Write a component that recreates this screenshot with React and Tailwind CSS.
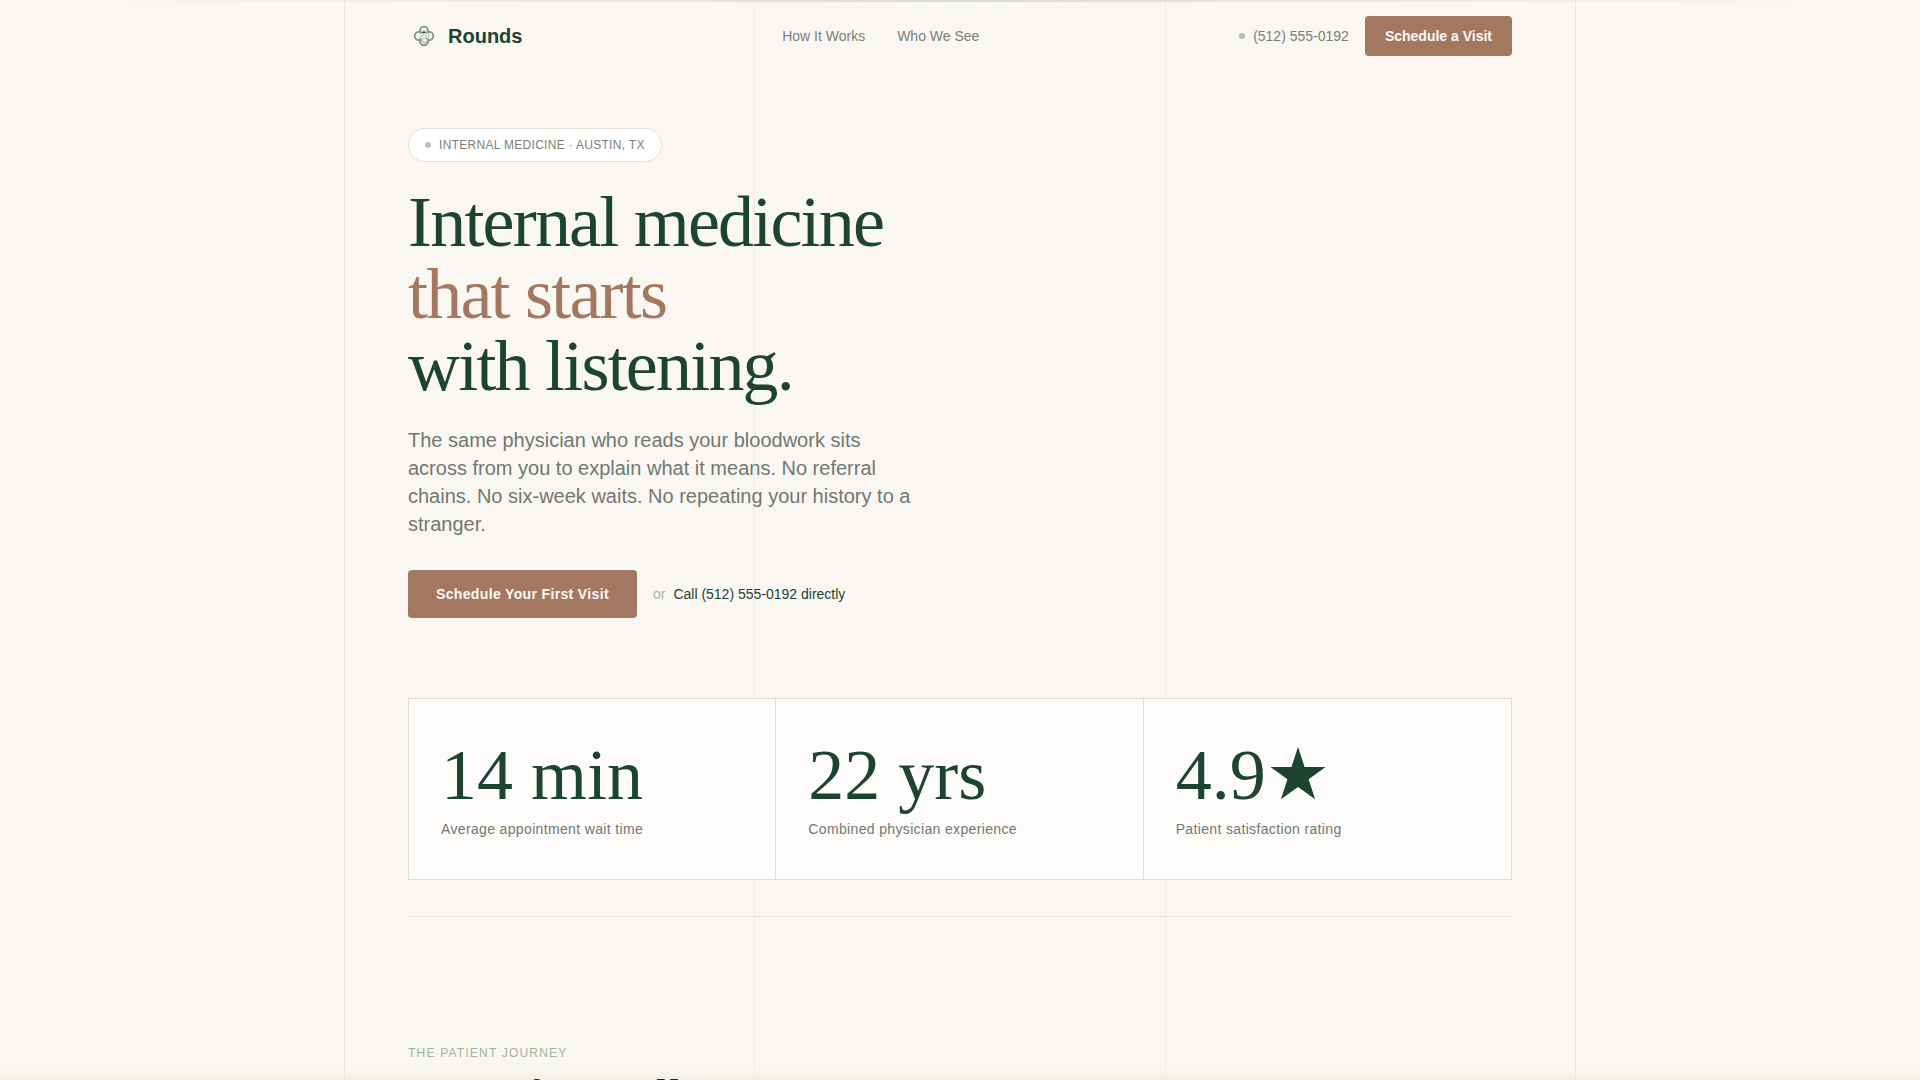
const stats = [
  { value: '14 min', label: 'Average appointment wait time' },
  { value: '22 yrs', label: 'Combined physician experience' },
  { value: '4.9★', label: 'Patient satisfaction rating' },
];

function Logo() {
  return (
    <svg className="size-8" viewBox="0 0 32 32" fill="none" aria-hidden="true">
      <path
        d="M12.4 12.4A4 4 0 1 1 19.6 12.4A4 4 0 1 1 19.6 19.6A4 4 0 1 1 12.4 19.6A4 4 0 1 1 12.4 12.4Z"
        stroke="#7b9a8a"
        strokeWidth="1.8"
      />
      <path d="M12.500 14c.5-4 6-4.500 7.500-.5M11 18c2-.5 3.500-3 5-3.500M20.500 14c1 2 .5 4.500-1.500 5.500" stroke="#9bb3a6" strokeWidth="1" />
      <path d="M13.500 12.400q2-1.600 4.500-.4q-.5 1.400-2.400 1.200" fill="#1b4332" />
      <path d="M16.500 15c3 0 3 3.500 0 3.500s-3 3.500.5 3.500M13 19c0 4.500 5 5.500 6.500 1.500" stroke="#c4a295" strokeWidth="1" />
    </svg>
  );
}

function GridLines() {
  return (
    <div className="pointer-events-none absolute inset-0 px-6" aria-hidden="true">
      <div className="mx-auto flex h-full max-w-[1232px] justify-between">
        <div className="w-px bg-[#eae7e0]" />
        <div className="w-px bg-[#f1eee8]" />
        <div className="w-px bg-[#f1eee8]" />
        <div className="w-px bg-[#eae7e0]" />
      </div>
    </div>
  );
}

function Header() {
  return (
    <header className="flex h-18 items-center justify-between">
      <a href="#" className="flex items-center gap-2 text-xl font-bold text-[#1b4332]">
        <Logo />
        Rounds
      </a>
      <nav className="flex gap-8 text-sm text-[#7b7f78]">
        <a href="#how">How It Works</a>
        <a href="#who">Who We See</a>
      </nav>
      <div className="flex items-center gap-4 text-sm">
        <a href="tel:5125550192" className="flex items-center gap-2 text-[#7b7f78]">
          <span className="size-1.5 rounded-full bg-[#abbfb3]" />
          (512) 555-0192
        </a>
        <button type="button" className="h-10 rounded-sm bg-[#a47860] px-5 font-bold text-[#fdfaf5]">
          Schedule a Visit
        </button>
      </div>
    </header>
  );
}

function Hero() {
  return (
    <section className="pt-14">
      <p className="inline-flex items-center gap-2 rounded-full border border-[#e2e1dc] bg-white px-4 py-2 text-xs tracking-wide text-[#7b7f78] uppercase">
        <span className="size-1.5 rounded-full bg-[#bcc2bd]" />
        Internal Medicine · Austin, TX
      </p>
      <h1 className="mt-6 font-['Liberation_Serif',serif] text-7xl leading-none tracking-tight text-[#1d4432]">
        Internal medicine
        <br />
        <span className="text-[#a47860]">that starts</span>
        <br />
        with listening.
      </h1>
      <p className="mt-6 max-w-lg text-xl text-[#717872]">
        The same physician who reads your bloodwork sits across from you to explain what it means. No referral
        chains. No six-week waits. No repeating your history to a stranger.
      </p>
      <div className="mt-8 flex items-center gap-4 text-sm">
        <button type="button" className="h-12 rounded-sm bg-[#a47860] px-7 font-bold tracking-wide text-[#fdfaf5]">
          Schedule Your First Visit
        </button>
        <p className="flex gap-2 text-[#a9b5ab]">
          or
          <a href="tel:5125550192" className="text-[#1d4432]">
            Call (512) 555-0192 directly
          </a>
        </p>
      </div>
    </section>
  );
}

function Stats() {
  return (
    <dl className="mt-20 grid grid-cols-3 border border-[#dcdcd7] bg-[#fdfcfa]">
      {stats.map((s) => (
        <div
          key={s.label}
          className="flex flex-col-reverse justify-end gap-2 border-r border-[#dcdcd7] px-8 py-10 last:border-r-0"
        >
          <dt className="text-sm tracking-wide text-[#717872]">{s.label}</dt>
          <dd className="h-18 font-['Liberation_Serif','DejaVu_Sans',serif] text-7xl leading-none text-[#1d4432]">
            {s.value}
          </dd>
        </div>
      ))}
    </dl>
  );
}

export default function App() {
  return (
    <div className="relative h-screen overflow-hidden bg-[#faf7f2] font-['Liberation_Sans',sans-serif]">
      <div className="absolute inset-x-0 bottom-0 h-3 bg-linear-to-b from-transparent to-[#f3efe6]" />
      <GridLines />
      <div className="absolute inset-x-0 top-0 h-0.5 bg-linear-to-r from-transparent from-4% via-[#d5ded6] to-transparent to-96%" />
      <main className="relative mx-auto max-w-[1232px] px-16">
        <Header />
        <Hero />
        <Stats />
        <hr className="mt-9 border-[#e7e5df]" />
        <section id="how" className="pt-32">
          <p className="text-xs tracking-widest text-[#9db3a5] uppercase">The Patient Journey</p>
          <h2 className="mt-3 font-['Liberation_Serif',serif] text-5xl text-[#1c1c1c]">From first call</h2>
        </section>
      </main>
    </div>
  );
}
